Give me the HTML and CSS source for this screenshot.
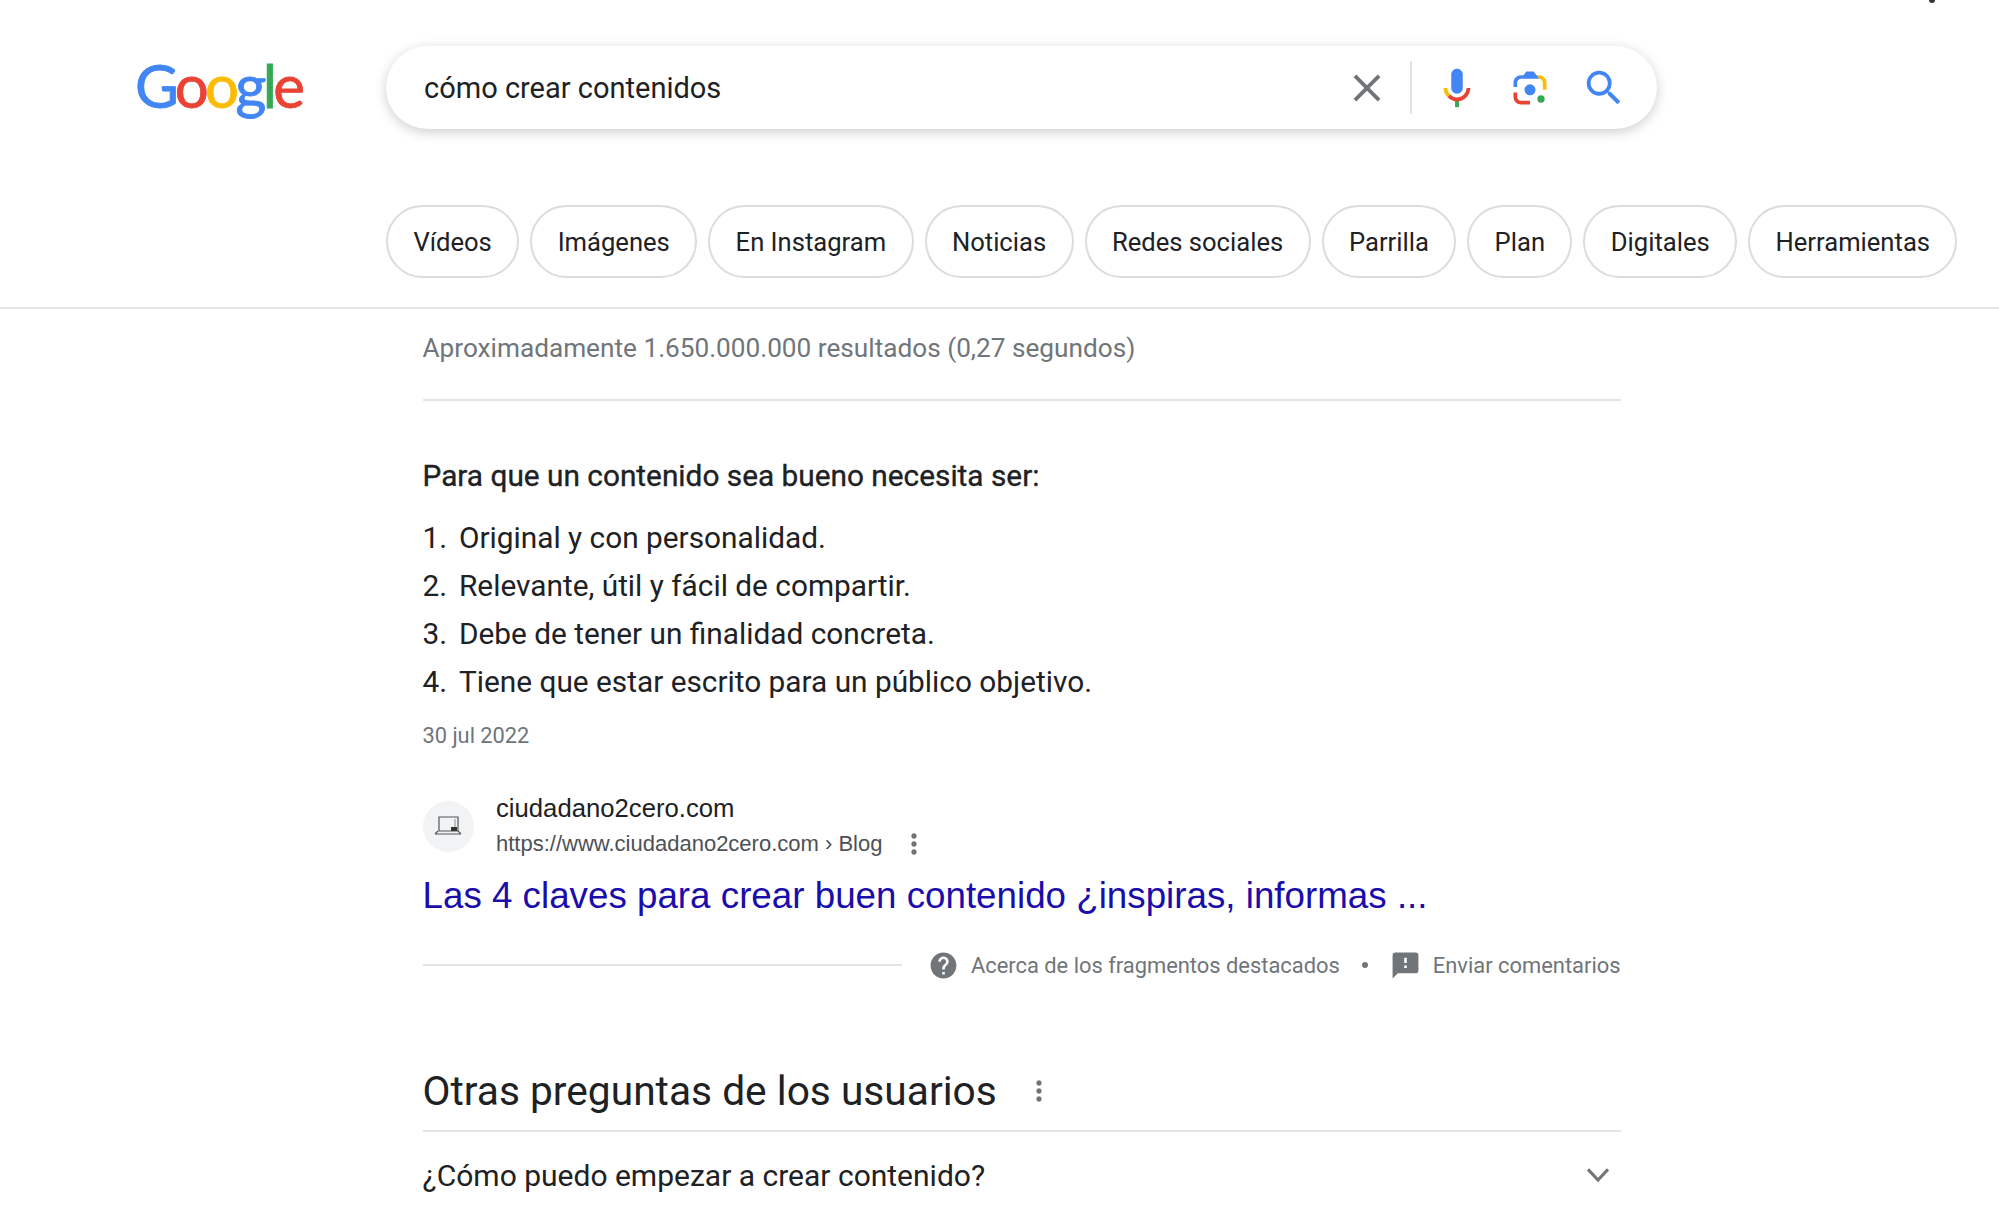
FILE: index.html
```html
<!DOCTYPE html>
<html lang="es">
<head>
<meta charset="utf-8">
<title>cómo crear contenidos - Buscar con Google</title>
<link rel="stylesheet" href="styles.css">
</head>
<body>
<span class="cursor"></span>
<header class="header">
  <div class="top-row">
    <a class="logo"><span class="blue">G</span><span class="red">o</span><span class="yellow">o</span><span class="blue">g</span><span class="green">l</span><span class="red">e</span></a>
    <div class="search">
      <span class="query">cómo crear contenidos</span>
      <svg class="ico-clear" viewBox="0 0 24 24"><path d="M19 6.41 17.59 5 12 10.59 6.41 5 5 6.41 10.59 12 5 17.59 6.41 19 12 13.41 17.59 19 19 17.59 13.41 12z"/></svg>
      <span class="vr"></span>
      <svg class="ico-mic" viewBox="0 0 24 24"><path fill="#4285f4" d="m12 15c1.66 0 3-1.31 3-2.97v-7.02c0-1.66-1.34-3.01-3-3.01s-3 1.34-3 3.01v7.02c0 1.66 1.34 2.97 3 2.97z"/><path fill="#34a853" d="m11 18.08h2v3.92h-2z"/><path fill="#fbbc04" d="m7.05 16.87c-1.27-1.33-2.05-2.83-2.05-4.87h2c0 1.45 0.56 2.42 1.47 3.38v0.32l-1.15 1.18z"/><path fill="#ea4335" d="m12 16.93a4.97 5.25 0 0 1 -3.54 -1.55l-1.41 1.49c1.36 1.43 3.21 2.16 4.95 2.16 3.62 0 6.8-2.89 7-7.03h-2c-.2 3.03-2.49 4.93-5 4.93z"/></svg>
      <svg class="ico-lens" viewBox="0 0 192 192"><circle fill="#34a853" cx="144.07" cy="144" r="16"/><circle fill="#4285f4" cx="96.07" cy="104" r="24"/><path fill="#ea4335" d="M24,135.2c0,18.11,14.69,32.8,32.8,32.8H96v-16l-40.1-0.1c-8.8,0-15.9-8.19-15.9-17.9v-18H24V135.2z"/><path fill="#fbbc04" d="M168,72.8c0-18.11-14.69-32.8-32.8-32.8H116l20,16c8.8,0,16,8.29,16,18v30h16V72.8z"/><path fill="#4285f4" d="M112,24l-32,0L68,40H56.8C38.69,40,24,54.69,24,72.8V92h16V74c0-9.71,7.2-18,16-18h80L112,24z"/></svg>
      <svg class="ico-search" viewBox="0 0 24 24"><path d="M15.5 14h-.79l-.28-.27A6.471 6.471 0 0 0 16 9.5 6.5 6.5 0 1 0 9.5 16c1.61 0 3.09-.59 4.23-1.57l.27.28v.79l5 4.99L20.49 19l-4.99-5zm-6 0C7.01 14 5 11.99 5 9.5S7.01 5 9.5 5 14 7.01 14 9.5 11.99 14 9.5 14z"/></svg>
    </div>
  </div>
  <nav class="chips">
    <a class="chip">Vídeos</a>
    <a class="chip">Imágenes</a>
    <a class="chip">En Instagram</a>
    <a class="chip">Noticias</a>
    <a class="chip">Redes sociales</a>
    <a class="chip">Parrilla</a>
    <a class="chip">Plan</a>
    <a class="chip">Digitales</a>
    <a class="chip">Herramientas</a>
  </nav>
</header>
<main class="content">
  <p class="stats">Aproximadamente 1.650.000.000 resultados (0,27 segundos)</p>
  <section class="snippet">
    <p class="lead">Para que un contenido sea bueno necesita ser:</p>
    <ol class="steps">
      <li>Original y con personalidad.</li>
      <li>Relevante, útil y fácil de compartir.</li>
      <li>Debe de tener un finalidad concreta.</li>
      <li>Tiene que estar escrito para un público objetivo.</li>
    </ol>
    <p class="date">30 jul 2022</p>
    <div class="source">
      <span class="favicon">
        <svg viewBox="0 0 30 24"><path d="M6 3h19v14H6zM2 20l3-3M28 20l-3-3M2 20h26" fill="none" stroke="#555" stroke-width="1.2"/><path d="M22 5v8" stroke="#888" stroke-width="1"/><rect x="18" y="13" width="6" height="4" fill="#333"/></svg>
      </span>
      <div class="source-text">
        <div class="site">ciudadano2cero.com</div>
        <div class="url"><span>https://www.ciudadano2cero.com › Blog</span>
          <svg class="kebab" viewBox="0 0 24 24"><path d="M12 8c1.1 0 2-.9 2-2s-.9-2-2-2-2 .9-2 2 .9 2 2 2zm0 2c-1.1 0-2 .9-2 2s.9 2 2 2 2-.9 2-2-.9-2-2-2zm0 6c-1.1 0-2 .9-2 2s.9 2 2 2 2-.9 2-2-.9-2-2-2z"/></svg>
        </div>
      </div>
    </div>
    <a class="result-title">Las 4 claves para crear buen contenido ¿inspiras, informas ...</a>
    <div class="snippet-foot">
      <span class="foot-line"></span>
      <svg class="foot-ico" viewBox="0 0 24 24"><path d="M12 2C6.48 2 2 6.48 2 12s4.48 10 10 10 10-4.48 10-10S17.52 2 12 2zm1 17h-2v-2h2v2zm2.07-7.75l-.9.92C13.45 12.9 13 13.5 13 15h-2v-.5c0-1.1.45-2.1 1.17-2.83l1.24-1.26c.37-.36.59-.86.59-1.41 0-1.1-.9-2-2-2s-2 .9-2 2H8c0-2.21 1.79-4 4-4s4 1.79 4 4c0 .88-.36 1.68-.93 2.25z"/></svg>
      <span class="foot-text">Acerca de los fragmentos destacados</span>
      <span class="foot-dot"></span>
      <svg class="foot-ico" viewBox="0 0 24 24"><path d="M20 2H4c-1.1 0-1.99.9-1.99 2L2 22l4-4h14c1.1 0 2-.9 2-2V4c0-1.1-.9-2-2-2zm-7 12h-2v-2h2v2zm0-4h-2V6h2v4z"/></svg>
      <span class="foot-text">Enviar comentarios</span>
    </div>
  </section>
  <section class="paa">
    <div class="paa-head">
      <h2>Otras preguntas de los usuarios</h2>
      <svg class="kebab" viewBox="0 0 24 24"><path d="M12 8c1.1 0 2-.9 2-2s-.9-2-2-2-2 .9-2 2 .9 2 2 2zm0 2c-1.1 0-2 .9-2 2s.9 2 2 2 2-.9 2-2-.9-2-2-2zm0 6c-1.1 0-2 .9-2 2s.9 2 2 2 2-.9 2-2-.9-2-2-2z"/></svg>
    </div>
    <div class="paa-row">
      <span>¿Cómo puedo empezar a crear contenido?</span>
      <svg class="chev" viewBox="0 0 24 24"><path d="M4 7.5 12 16l8-8.5" fill="none" stroke="#70757a" stroke-width="2.4"/></svg>
    </div>
  </section>
</main>
</body>
</html>
```
FILE: styles.css
```css
* { box-sizing: border-box; }
html, body { margin: 0; height: 1211px; overflow: hidden; background: #fff; }
body { font-family: Roboto, "Liberation Sans", sans-serif; color: #202124; position: relative; }
p, h2, ol { margin: 0; padding: 0; }

.cursor { position: absolute; top: 0; left: 1929px; width: 6px; height: 3px; background: #333; border-radius: 0 0 3px 3px; }

.header { height: 309px; border-bottom: 2px solid #e3e4e6; padding-top: 46px; }
.top-row { display: flex; align-items: center; height: 83px; }
.logo { width: 386px; padding-left: 135px; padding-bottom: 5px; font-family: Lato, sans-serif; font-size: 60px; line-height: 78px; letter-spacing: -3.7px; font-weight: 400; -webkit-text-stroke: .8px; }
.blue { color: #4285f4; } .red { color: #ea4335; } .yellow { color: #fbbc05; } .green { color: #34a853; }

.search { width: 1271px; height: 83px; border-radius: 42px; display: flex; align-items: center; padding-left: 38px; box-shadow: 0 3px 12px rgba(32,33,36,.22); background: #fff; }
.query { flex: 1; font-size: 29px; color: #202124; }
.ico-clear { width: 46px; height: 46px; fill: #70757a; margin-right: 20.5px; }
.vr { width: 2px; height: 53px; background: #dfe1e5; margin-right: 22px; }
.ico-mic { width: 46px; height: 46px; margin-right: 28px; }
.ico-lens { width: 44px; height: 44px; margin-right: 28.5px; }
.ico-search { width: 46px; height: 46px; fill: #4285f4; margin-right: 30.5px; }

.chips { display: flex; gap: 11px; padding-left: 386px; margin-top: 76px; }
.chip { height: 73px; border: 2px solid #dadce0; border-radius: 37px; padding: 0 25.4px; display: flex; align-items: center; font-size: 25.6px; color: #202124; white-space: nowrap; }

.content { width: 1198px; margin-left: 422.5px; }
.stats { height: 92px; padding-top: 19px; line-height: 40px; font-size: 26.2px; color: #70757a; border-bottom: 2px solid #e3e4e6; }

.lead { margin-top: 55px; font-size: 29.8px; line-height: 40px; font-weight: 400; -webkit-text-stroke: .35px #202124; color: #202124; }
.steps { margin-top: 18px; list-style: none; counter-reset: n; }
.steps li { counter-increment: n; height: 48px; line-height: 48px; font-size: 29.8px; display: flex; }
.steps li::before { content: counter(n) "."; width: 36.5px; }
.date { margin-top: 15px; font-size: 21.8px; line-height: 30px; color: #70757a; }

.source { display: flex; align-items: center; gap: 22.5px; margin-top: 39px; }
.favicon { width: 51px; height: 51px; border-radius: 50%; background: #f1f3f4; display: flex; align-items: center; justify-content: center; }
.favicon svg { width: 30px; height: 24px; }
.source-text { font-family: "Liberation Sans", Arial, sans-serif; }
.site { font-size: 25.7px; line-height: 36px; color: #202124; }
.url { display: flex; align-items: center; font-size: 22px; line-height: 36px; color: #4d5156; }
.kebab { width: 32px; height: 32px; fill: #70757a; }
.url .kebab { margin-left: 16px; }
.result-title { display: block; margin-top: 9px; font-family: "Liberation Sans", Arial, sans-serif; font-size: 36.75px; line-height: 50px; color: #1a0dab; white-space: nowrap; }

.snippet-foot { display: flex; align-items: center; margin-top: 26px; height: 36px; font-size: 21.9px; color: #70757a; }
.foot-line { flex: 1; height: 2px; background: #e3e4e6; margin-right: 26px; }
.foot-ico { width: 31px; height: 31px; fill: #70757a; }
.foot-text { margin-left: 12px; white-space: nowrap; }
.foot-dot { width: 6px; height: 6px; border-radius: 50%; background: #70757a; margin: 0 22px; }

.paa { margin-top: 69px; }
.paa-head { display: flex; align-items: center; height: 80px; border-bottom: 2px solid #e3e4e6; }
.paa-head h2 { font-size: 40.7px; font-weight: 400; color: #202124; margin-right: 26px; }
.paa-row { display: flex; align-items: center; justify-content: space-between; height: 86px; font-size: 30px; color: #202124; }
.chev { width: 30px; height: 30px; margin-right: 8px; }
```
